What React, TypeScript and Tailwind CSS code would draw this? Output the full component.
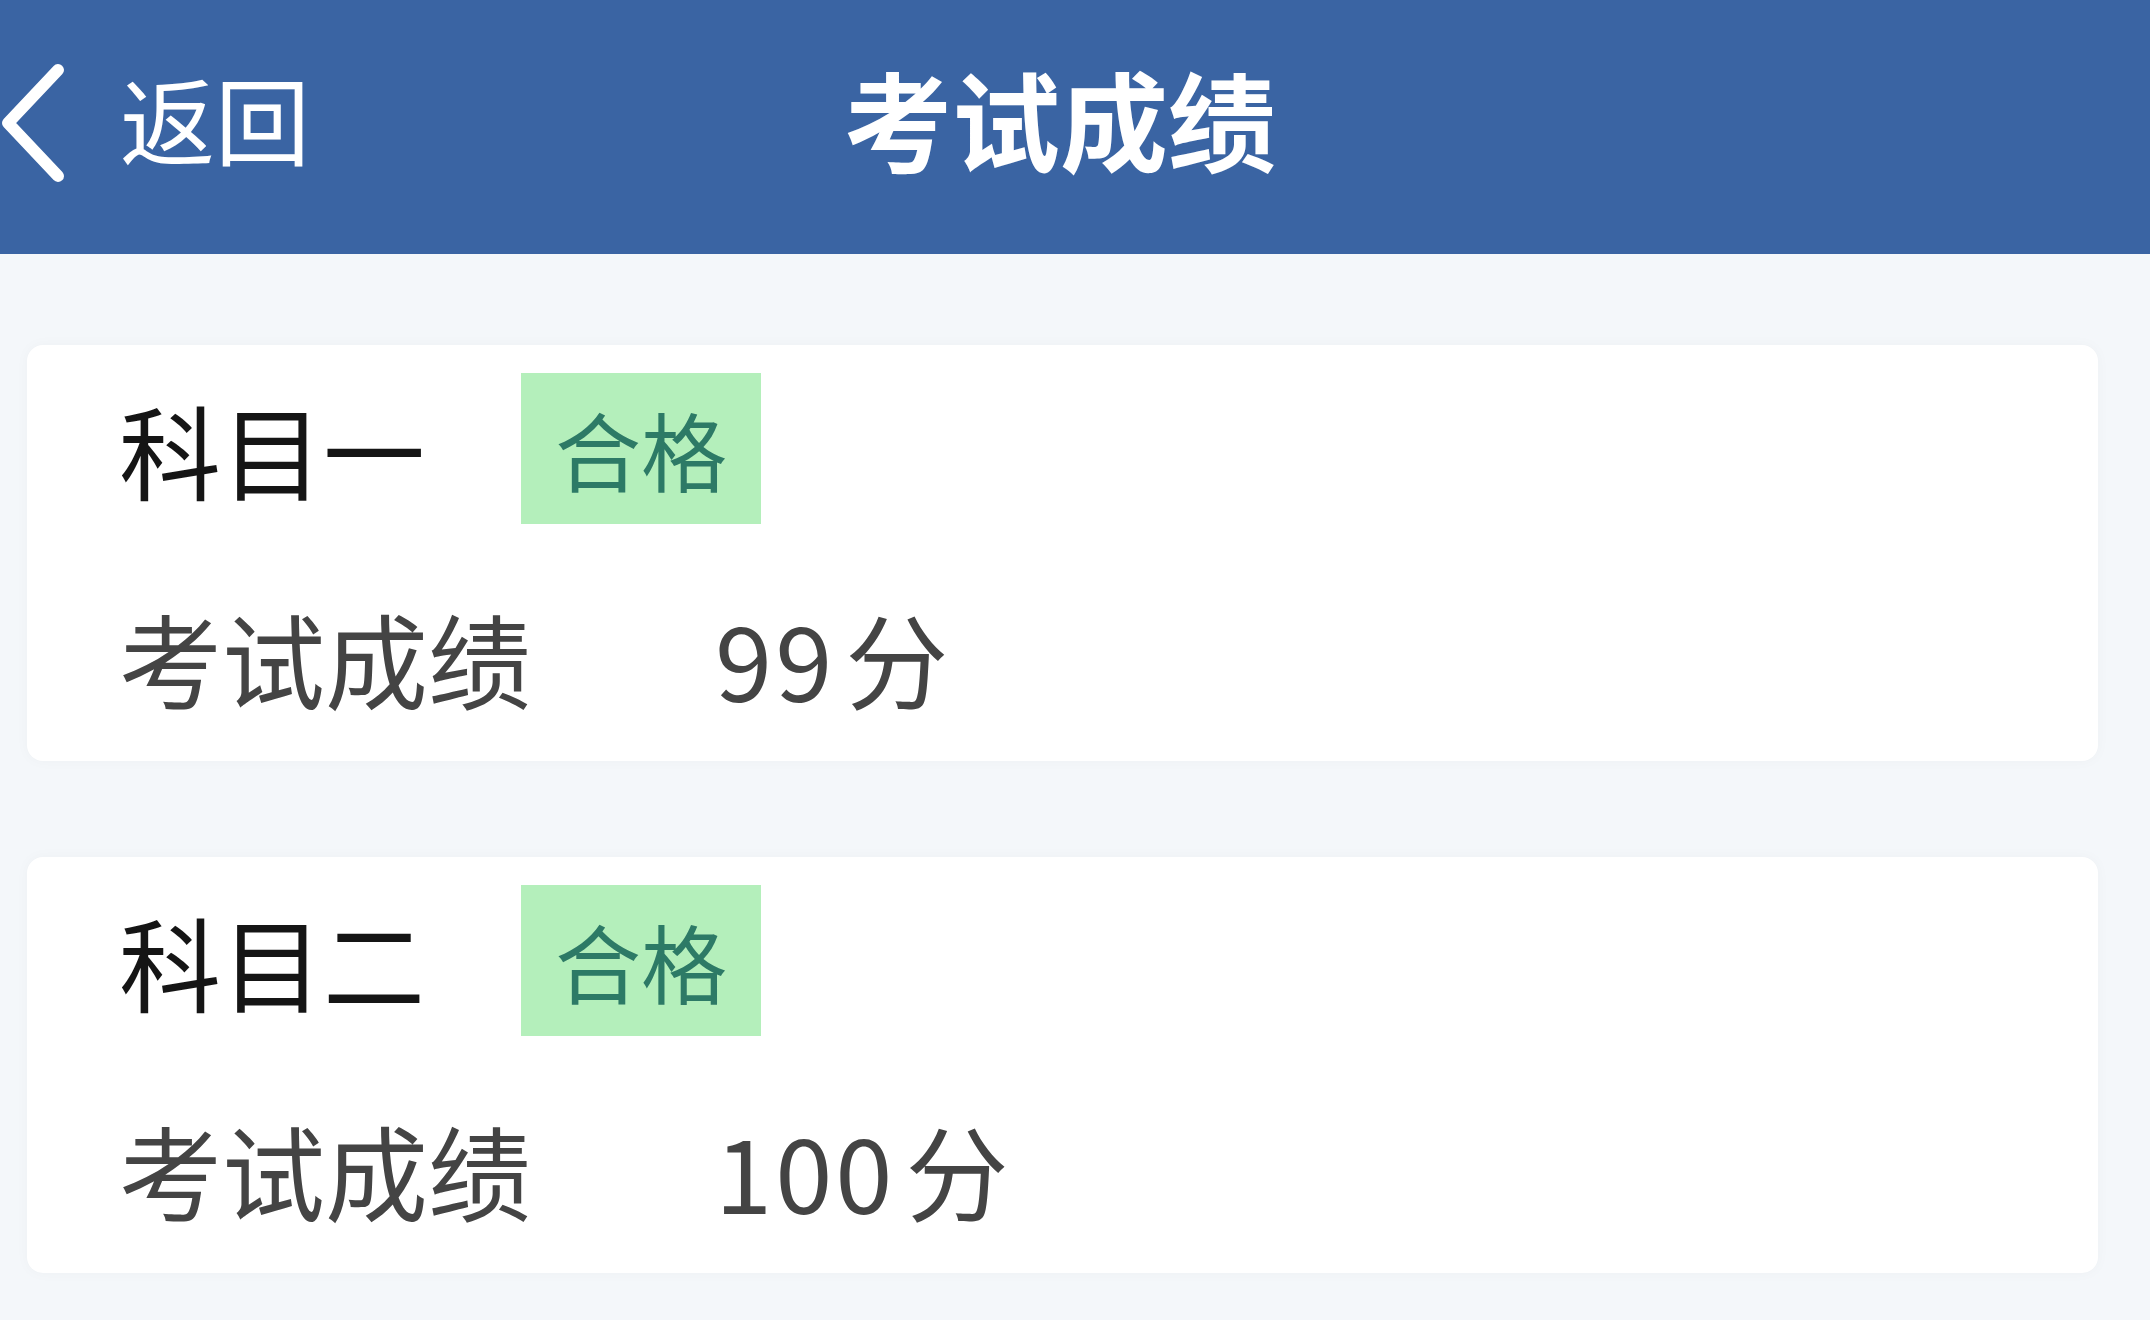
import React from 'react'

const results = [
  { subject: '科目一', status: '合格', score: '99' },
  { subject: '科目二', status: '合格', score: '100' },
]

const font = { fontFamily: '"Noto Sans CJK SC", "Noto Sans", sans-serif' }

export default function App() {
  return (
    <div className="min-h-[1320px] w-[2150px] bg-[#f4f7fa]" style={font}>
      {/* top bar */}
      <header className="flex h-[254px] items-center bg-[#3a64a3] pb-[20px] text-white">
        <div className="flex w-[320px] items-center">
          <svg width="66" height="122" viewBox="0 0 66 122" className="mt-[12px] shrink-0">
            <path d="M58 8 L8 61 L58 114" fill="none" stroke="#fff" strokeWidth="12" strokeLinecap="round" strokeLinejoin="round" />
          </svg>
          <span className="ml-[54px] text-[95px] leading-none">返回</span>
        </div>
        <h1 className="flex-1 text-center text-[108px] font-bold leading-none">考试成绩</h1>
        <div className="w-[350px]" />
      </header>

      <main className="flex flex-col gap-[96px] pl-[27px] pr-[52px] pt-[91px]">
        {results.map((r) => (
          <section
            key={r.subject}
            className="flex h-[416px] flex-col rounded-2xl bg-white pl-[92px] pt-[28px] shadow-[0_0_14px_rgba(0,0,0,0.03)]"
          >
            <div className="flex h-[151px] items-center">
              <span className="text-[102px] leading-none text-[#151515]">{r.subject}</span>
              <span className="ml-[96px] flex h-[151px] w-[240px] items-center justify-center bg-[#b4efbb] text-[86px] leading-none text-[#2d7a66]">
                {r.status}
              </span>
            </div>
            <div className="mt-[82px] flex items-center text-[103px] leading-none text-[#444]">
              <span>考试成绩</span>
              <span className="ml-[184px] tracking-[3px]">{r.score}</span>
              <span className="ml-[10px]">分</span>
            </div>
          </section>
        ))}
      </main>
    </div>
  )
}
